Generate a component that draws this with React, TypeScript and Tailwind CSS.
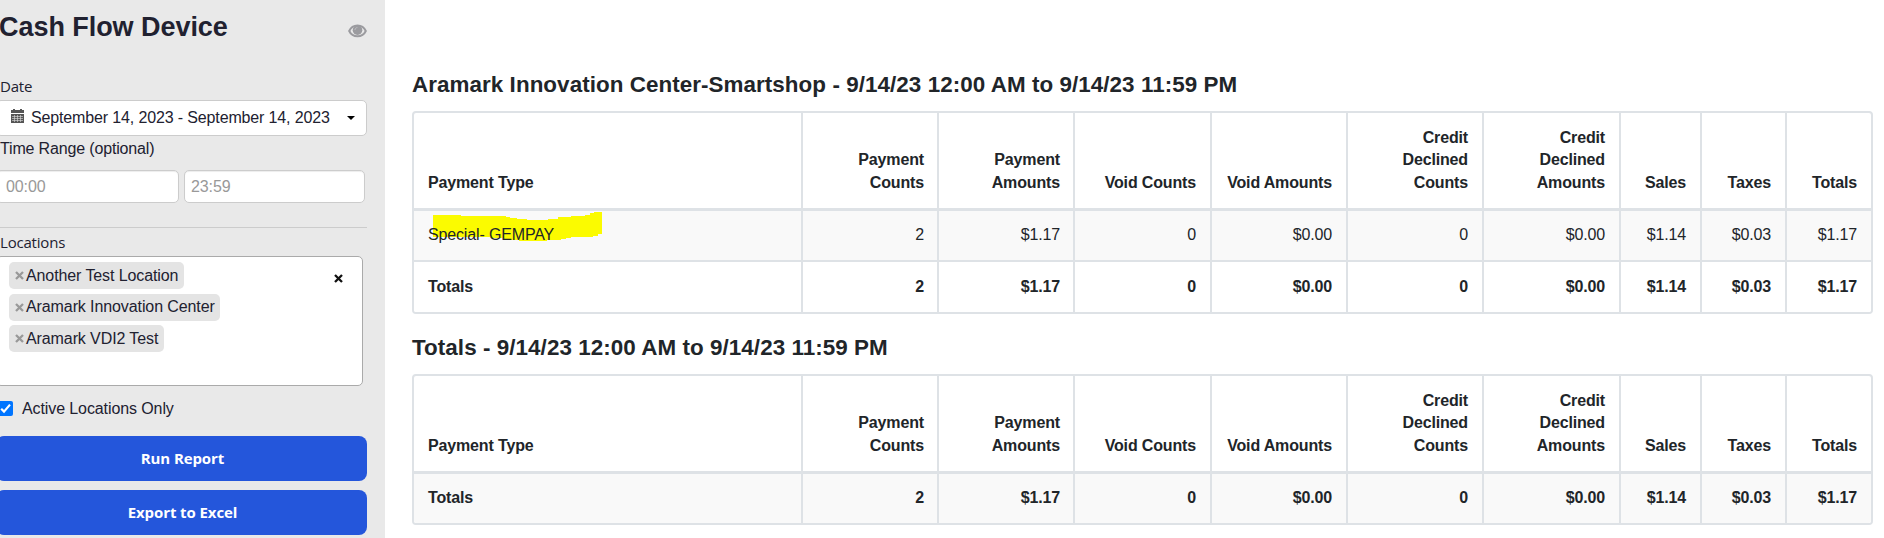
import React from "react";

const gridCols =
  "grid grid-cols-[389px_136px_136px_137px_136px_136px_137px_81px_85px_84px]";

const headers = [
  ["Payment Type"],
  ["Payment", "Counts"],
  ["Payment", "Amounts"],
  ["Void Counts"],
  ["Void Amounts"],
  ["Credit", "Declined", "Counts"],
  ["Credit", "Declined", "Amounts"],
  ["Sales"],
  ["Taxes"],
  ["Totals"],
];

const values = ["2", "$1.17", "0", "$0.00", "0", "$0.00", "$1.14", "$0.03", "$1.17"];

function Highlight() {
  return (
    <svg className="absolute left-[19px] top-[1px]" width="170" height="31" viewBox="0 0 170 31">
      <path
        fill="#fbfb00"
        d="M0 3H28V4H73V5H77V6H84V7H94V8H115V7H125V5H138V4H152V3H157V1H161V0H169V22H165V24H160V25H138V26H133V27H128V28H114V29H86V28H77V27H71V26H57V25H0Z"
      />
    </svg>
  );
}

function Row({ label, bold, striped, last, marked }: { label: string; bold?: boolean; striped?: boolean; last?: boolean; marked?: boolean }) {
  return (
    <div
      className={`${gridCols} ${striped ? "bg-[#f9f9f9]" : "bg-white"} ${last ? "" : "border-b-2 border-[#dee2e6]"} ${bold ? "font-bold" : ""}`}
    >
      {[label, ...values].map((v, i) => (
        <div
          key={i}
          className={`relative flex items-center pl-[14px] tracking-[-0.15px] ${i < 3 ? "pr-[13px]" : "pr-[14px]"} ${striped ? "h-[49px] pb-[2px]" : "h-[50px]"} ${i === 0 ? "" : "justify-end"} ${i === 9 ? "" : "border-r-2 border-[#dee2e6]"}`}
        >
          {marked && i === 0 && <Highlight />}
          <span className="relative">{v}</span>
        </div>
      ))}
    </div>
  );
}

function Report({ title, children }: { title: string; children: React.ReactNode }) {
  return (
    <section>
      <h2 className="h-[51px] text-[22.4px] leading-[49px] font-bold tracking-[0.065px] whitespace-nowrap">{title}</h2>
      <div className="w-[1461px] overflow-hidden rounded-[4px] border-2 border-[#dee2e6]">
        <div className={`${gridCols} border-b-[3px] border-[#dee2e6] font-bold`}>
          {headers.map((lines, i) => (
            <div
              key={i}
              className={`flex h-[95px] flex-col justify-end pb-[14px] pl-[14px] leading-[22.5px] tracking-[-0.15px] ${i < 3 ? "pr-[13px]" : "pr-[14px]"} ${i === 0 ? "" : "text-right"} ${i === 9 ? "" : "border-r-2 border-[#dee2e6]"}`}
            >
              {lines.map((l) => (
                <span key={l} className="whitespace-nowrap">{l}</span>
              ))}
            </div>
          ))}
        </div>
        {children}
      </div>
    </section>
  );
}

function Cross({ className }: { className: string }) {
  return (
    <svg className={className} width="9" height="9" viewBox="0 0 9 9">
      <path d="M1 1L8 8M8 1L1 8" stroke="currentColor" strokeWidth="2.3" />
    </svg>
  );
}

function Chip({ label, className }: { label: string; className: string }) {
  return (
    <div className={`flex h-[27px] items-center rounded-[5px] bg-[#e4e4e4] pl-[6px] tracking-[-0.1px] ${className}`}>
      <Cross className="mr-[2px] text-[#999]" />
      <span className="whitespace-nowrap">{label}</span>
    </div>
  );
}

export default function App() {
  return (
    <div className="flex h-[538px] w-[1884px] overflow-hidden bg-white font-['Liberation_Sans',Arial,sans-serif] text-[16px] text-[#212529]">
      <aside className="h-[538px] w-[385px] shrink-0 overflow-hidden bg-[#e9e9e9] text-[#212130]">
        <div className="-ml-[4px] flex w-[371px] flex-col">
          <div className="flex h-[72px] items-start justify-between">
            <h1 className="pt-[7px] pl-[3px] text-[27px] leading-[40px] font-bold tracking-[-0.05px] whitespace-nowrap">Cash Flow Device</h1>
            <svg className="mt-[24px]" width="19" height="14" viewBox="0 0 19 14">
              <path d="M1.2 7C4.5 -.5 14.5 -.5 17.8 7C14.5 14 4.5 14 1.2 7Z" fill="none" stroke="#9b9b9f" strokeWidth="2" />
              <circle cx="9.5" cy="6.2" r="4.8" fill="#9b9b9f" />
              <path d="M7 6C7 4.6 8 3.6 9.4 3.6" fill="none" stroke="#c4c4c6" strokeWidth=".8" />
            </svg>
          </div>
          <div className="h-[28px] pl-[4px] font-['Open_Sans',sans-serif] text-[15px] leading-[28px] tracking-[-0.2px]">Date</div>
          <div className="flex h-[36px] items-center rounded-[5px] border border-[#ccc] bg-white pl-[14px]">
            <svg className="-mt-[4px]" width="13" height="14" viewBox="0 0 13 14">
              <path d="M0 1H2V0H4V1H9V0H11V1H13V4H0Z M0 5H13V14H0Z" fill="#555" />
              <path d="M1 7.5H12M1 9.5H12M1 11.5H12M3.5 6V13M6.5 6V13M9.5 6V13" stroke="#ddd" strokeWidth=".6" />
            </svg>
            <span className="ml-[7px] tracking-[-0.14px] whitespace-nowrap">September 14, 2023 - September 14, 2023</span>
            <svg className="mr-[11px] ml-auto" width="8" height="4" viewBox="0 0 8 4">
              <path d="M0 0H8L4 4Z" fill="#000" />
            </svg>
          </div>
          <div className="h-[34px] pl-[4px] leading-[25px] tracking-[-0.16px]">Time Range (optional)</div>
          <div className="flex gap-[5px] text-[#999]">
            <div className="h-[33px] w-[183px] rounded-[5px] border border-[#ccc] bg-white pl-[9px] leading-[31px] tracking-[-0.1px] shadow-[inset_0_1px_1px_rgba(0,0,0,0.075)]">00:00</div>
            <div className="h-[33px] w-[181px] rounded-[5px] border border-[#ccc] bg-white pl-[6px] leading-[31px] tracking-[-0.1px] shadow-[inset_0_1px_1px_rgba(0,0,0,0.075)]">23:59</div>
          </div>
          <div className="mt-[24px] border-t border-[#ccc]" />
          <div className="h-[28px] pl-[4px] font-['Open_Sans',sans-serif] text-[15px] leading-[29px] tracking-[-0.2px]">Locations</div>
          <div className="flex h-[130px] w-[367px] justify-between rounded-[5px] border border-[#aaa] bg-white pt-[5px] pr-[19px] pl-[12px]">
            <div className="flex flex-col gap-[4.5px]">
              <Chip label="Another Test Location" className="w-[175px]" />
              <Chip label="Aramark Innovation Center" className="w-[211px]" />
              <Chip label="Aramark VDI2 Test" className="w-[155px]" />
            </div>
            <Cross className="mt-[12px] text-[#111]" />
          </div>
          <div className="mt-[10px] flex h-[25px] items-center pl-[2px]">
            <svg width="15" height="15" viewBox="0 0 15 15">
              <rect width="15" height="15" rx="2" fill="#0075ff" />
              <path d="M3.2 7.8L6 10.6L12 3.6" fill="none" stroke="#fff" strokeWidth="2.2" />
            </svg>
            <span className="ml-[9px] tracking-[-0.1px]">Active Locations Only</span>
          </div>
          <button className="mt-[15px] h-[45px] rounded-[8px] bg-[#2456db] pl-[2px] font-['Open_Sans',sans-serif] text-[15px] font-bold tracking-[-0.1px] text-white">Run Report</button>
          <button className="mt-[9px] h-[45px] rounded-[8px] bg-[#2456db] pl-[2px] font-['Open_Sans',sans-serif] text-[15px] font-bold tracking-[-0.1px] text-white">Export to Excel</button>
        </div>
      </aside>
      <main className="flex flex-col gap-[9px] pt-[60px] pl-[27px]">
        <Report title="Aramark Innovation Center-Smartshop - 9/14/23 12:00 AM to 9/14/23 11:59 PM">
          <Row label="Special- GEMPAY" striped marked />
          <Row label="Totals" bold last />
        </Report>
        <Report title="Totals - 9/14/23 12:00 AM to 9/14/23 11:59 PM">
          <Row label="Totals" bold striped last />
        </Report>
      </main>
    </div>
  );
}
